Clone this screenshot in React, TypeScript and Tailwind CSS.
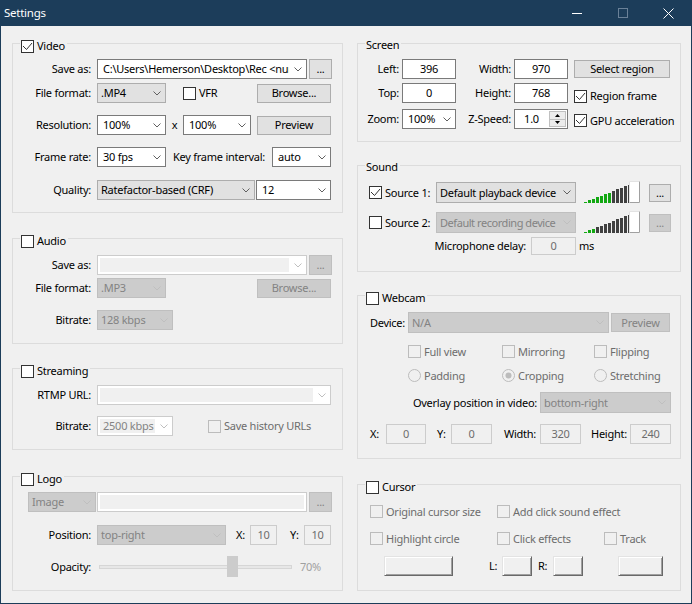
import React from 'react';

type V = 'edit' | 'list' | 'dlist' | 'dedit';

const Chevron = ({ d }: { d?: boolean }) => (
  <svg width="8" height="5" viewBox="0 0 8 5">
    <path d="M0.5 0.5L4 4L7.5 0.5" fill="none" stroke={d ? '#bfbfbf' : '#606060'} strokeWidth="1" />
  </svg>
);

function Combo({ w, text, v, h = 'h-[20px]', noArrow, tight }: { w: string; text?: string; v: V; h?: string; noArrow?: boolean; tight?: boolean }) {
  const cls = {
    edit: 'bg-white border-[#7a7a7a] text-black',
    list: 'bg-[#e1e1e1] border-[#adadad] text-black',
    dlist: 'bg-[#cccccc] border-[#bfbfbf] text-[#838383]',
    dedit: 'bg-white border-[#cccccc] text-[#838383]',
  }[v];
  const dis = v === 'dlist' || v === 'dedit';
  return (
    <div className={`flex shrink-0 border ${cls} ${w} ${h}`}>
      {v === 'dedit' ? (
        <div className={`flex-1 min-w-0 my-[2px] ml-[2px] ${noArrow ? 'mr-[2px]' : ''} bg-[#f0f0f0] flex items-center pl-[3px] overflow-hidden whitespace-nowrap`}>
          {text}
        </div>
      ) : (
        <div
          className={`flex-1 min-w-0 flex items-center ${v === 'edit' ? 'pl-[5px]' : 'pl-[3px]'} ${
            tight ? 'tracking-[-0.45px]' : ''
          } overflow-hidden whitespace-nowrap`}
        >
          {text}
        </div>
      )}
      {!noArrow && (
        <div className="w-[17px] shrink-0 flex items-center justify-center">
          <Chevron d={dis} />
        </div>
      )}
    </div>
  );
}

function Btn({ cls, children, d }: { cls: string; children?: React.ReactNode; d?: boolean }) {
  return (
    <div
      className={`flex shrink-0 items-center justify-center border whitespace-nowrap ${
        d ? 'bg-[#cccccc] border-[#bfbfbf] text-[#838383]' : 'bg-[#e1e1e1] border-[#adadad] text-black'
      } ${cls}`}
    >
      {children}
    </div>
  );
}

function Btn3d({ cls }: { cls: string }) {
  return (
    <div className={`shrink-0 h-[20px] bg-[#f0f0f0] border border-t-[#e3e3e3] border-l-[#e3e3e3] border-r-[#696969] border-b-[#696969] shadow-[inset_1px_1px_0_#ffffff,inset_-1px_-1px_0_#a0a0a0] ${cls}`} />
  );
}

function TBox({ cls, children, d }: { cls: string; children?: React.ReactNode; d?: boolean }) {
  return (
    <div
      className={`flex shrink-0 items-center justify-center border h-[20px] ${
        d ? 'bg-[#f0f0f0] border-[#cccccc] text-[#6d6d6d]' : 'bg-white border-[#7a7a7a] text-black'
      } ${cls}`}
    >
      {children}
    </div>
  );
}

function Check({ checked, d }: { checked?: boolean; d?: boolean }) {
  return (
    <span className={`inline-flex shrink-0 w-[13px] h-[13px] border ${d ? 'border-[#bcbcbc] bg-[#f0f0f0]' : 'border-[#333333] bg-white'}`}>
      {checked && (
        <svg width="11" height="11" viewBox="0 0 11 11">
          <path d="M1 5L4.5 8.5L10 2" fill="none" stroke="#333333" strokeWidth="1" />
        </svg>
      )}
    </span>
  );
}

function Radio({ checked }: { checked?: boolean }) {
  return (
    <svg width="13" height="13" viewBox="0 0 13 13" className="shrink-0">
      <circle cx="6.5" cy="6.5" r="6" fill="#f0f0f0" stroke="#bcbcbc" strokeWidth="1" />
      {checked && <circle cx="6.5" cy="6.5" r="3" fill="#bcbcbc" />}
    </svg>
  );
}

function CheckItem({ cls, label, checked, d }: { cls: string; label: string; checked?: boolean; d?: boolean }) {
  return (
    <div className={`flex items-center shrink-0 whitespace-nowrap ${cls}`}>
      <Check checked={checked} d={d} />
      <span className={`ml-[3px] ${d ? 'text-[#6d6d6d]' : ''}`}>{label}</span>
    </div>
  );
}

function RadioItem({ cls, label, checked }: { cls: string; label: string; checked?: boolean }) {
  return (
    <div className={`flex items-center shrink-0 whitespace-nowrap ${cls}`}>
      <Radio checked={checked} />
      <span className="ml-[3px] text-[#6d6d6d]">{label}</span>
    </div>
  );
}

function Lbl({ w = 'w-[78px]', children, cls = '' }: { w?: string; children: React.ReactNode; cls?: string }) {
  return <div className={`${w} shrink-0 text-right whitespace-nowrap ${cls}`}>{children}</div>;
}

function Row({ cls, children }: { cls: string; children: React.ReactNode }) {
  return <div className={`flex items-center shrink-0 ${cls}`}>{children}</div>;
}

function Group({ cls, title, check, children }: { cls: string; title: string; check?: boolean; children?: React.ReactNode }) {
  return (
    <div className={`border border-[#dcdcdc] flex flex-col shrink-0 ${cls}`}>
      <div className="-mt-[5px] ml-[7px] h-[14px] w-fit bg-[#f0f0f0] flex items-center pl-[1px] pr-[2px]">
        {check !== undefined && <Check checked={check} />}
        <span className={check !== undefined ? 'ml-[3px] -mt-[1px]' : '-mt-[2px]'}>{title}</span>
      </div>
      {children}
    </div>
  );
}

function Meter({ green }: { green: number }) {
  const hs = [1, 3, 4, 6, 7, 9, 10, 12, 14, 15, 17, 18];
  return (
    <svg width="57" height="23" viewBox="0 0 57 23" className="shrink-0">
      {hs.map((h, i) => (
        <rect key={i} x={i * 4} y={22 - h} width="3" height={h} fill={i < green ? '#12a812' : '#404040'} />
      ))}
      <rect x="45" y="0" width="11" height="22" fill="#ffffff" />
      <path d="M45.5 21.5V0.5H55.5" fill="none" stroke="#e3e3e3" strokeWidth="1" />
      <path d="M55.5 0.5V21.5H45.5" fill="none" stroke="#a0a0a0" strokeWidth="1" />
    </svg>
  );
}

function TitleBar() {
  return (
    <div className="h-[26px] flex items-center shrink-0 text-white">
      <span className="pl-[3px] text-[11.5px] -mt-[1px]">Settings</span>
      <div className="ml-auto flex h-full">
        <div className="w-[46px] flex items-center justify-center">
          <svg width="10" height="10" viewBox="0 0 10 10">
            <path d="M0 5.5H10" stroke="#ffffff" strokeWidth="1" />
          </svg>
        </div>
        <div className="w-[46px] flex items-center justify-center">
          <svg width="10" height="10" viewBox="0 0 10 10">
            <rect x="0.5" y="0.5" width="9" height="9" fill="none" stroke="#6a8198" strokeWidth="1" />
          </svg>
        </div>
        <div className="w-[45px] flex items-center justify-center">
          <svg width="11" height="11" viewBox="0 0 11 11">
            <path d="M0.5 0.5L10.5 10.5M10.5 0.5L0.5 10.5" stroke="#ffffff" strokeWidth="1" />
          </svg>
        </div>
      </div>
    </div>
  );
}

function Spin() {
  return (
    <div className="ml-[3px] w-[54px] h-[20px] flex shrink-0 border border-[#7a7a7a] bg-white">
      <div className="flex-1 flex items-center justify-center">1.0</div>
      <div className="w-[17px] flex flex-col border border-[#c0c0c0] bg-[#ececec] m-[1px]">
        <div className="flex-1 flex items-center justify-center border-b border-[#c0c0c0]">
          <svg width="5" height="3" viewBox="0 0 5 3">
            <path d="M0 3L2.5 0L5 3Z" fill="#000000" />
          </svg>
        </div>
        <div className="flex-1 flex items-center justify-center">
          <svg width="5" height="3" viewBox="0 0 5 3">
            <path d="M0 0L2.5 3L5 0Z" fill="#000000" />
          </svg>
        </div>
      </div>
    </div>
  );
}

export default function App() {
  return (
    <div className="w-[692px] h-[604px] bg-[#1c3d5a] flex flex-col px-[1px] pb-[1px] font-['Noto_Sans',sans-serif] text-[11px] leading-[14px] tracking-[-0.25px] text-black select-none overflow-hidden">
      <TitleBar />
      <div className="flex-1 bg-[#f0f0f0] flex">
        {/* Left column */}
        <div className="ml-[11px] w-[331px] flex flex-col shrink-0">
          <Group cls="mt-[17px] h-[170px]" title="Video" check>
            <Row cls="mt-[6px] h-[20px]">
              <Lbl>Save as:</Lbl>
              <Combo w="ml-[6px] w-[210px]" v="edit" text="C:\Users\Hemerson\Desktop\Rec <num" />
              <Btn cls="ml-[2px] w-[23px] h-[20px]">...</Btn>
            </Row>
            <Row cls="mt-[4px] h-[20px]">
              <Lbl>File format:</Lbl>
              <Combo w="ml-[6px] w-[69px]" v="list" text=".MP4" />
              <CheckItem cls="ml-[17px]" label="VFR" />
              <Btn cls="ml-auto mr-[11px] w-[74px] h-[19px]">Browse...</Btn>
            </Row>
            <Row cls="mt-[12px] h-[20px]">
              <Lbl>Resolution:</Lbl>
              <Combo w="ml-[6px] w-[69px]" v="edit" text="100%" />
              <span className="w-[17px] text-center">x</span>
              <Combo w="w-[68px]" v="edit" text="100%" />
              <Btn cls="ml-auto mr-[11px] w-[74px] h-[19px]">Preview</Btn>
            </Row>
            <Row cls="mt-[12px] h-[20px]">
              <Lbl>Frame rate:</Lbl>
              <Combo w="ml-[6px] w-[69px]" v="edit" text="30 fps" />
              <span className="ml-[7px] whitespace-nowrap">Key frame interval:</span>
              <Combo w="ml-auto mr-[11px] w-[59px]" v="edit" text="auto" />
            </Row>
            <Row cls="mt-[13px] h-[20px]">
              <Lbl>Quality:</Lbl>
              <Combo w="ml-[6px] w-[158px]" v="list" text="Ratefactor-based (CRF)" />
              <Combo w="ml-[1px] w-[75px]" v="edit" text="12" />
            </Row>
          </Group>

          <Group cls="mt-[25px] h-[106px]" title="Audio" check={false}>
            <Row cls="mt-[7px] h-[20px]">
              <Lbl>Save as:</Lbl>
              <Combo w="ml-[6px] w-[210px]" v="dedit" text="" />
              <Btn cls="ml-[2px] w-[23px] h-[20px]" d>...</Btn>
            </Row>
            <Row cls="mt-[3px] h-[20px]">
              <Lbl>File format:</Lbl>
              <Combo w="ml-[6px] w-[69px]" v="dlist" text=".MP3" />
              <Btn cls="ml-auto mr-[11px] w-[74px] h-[19px]" d>Browse...</Btn>
            </Row>
            <Row cls="mt-[12px] h-[20px]">
              <Lbl>Bitrate:</Lbl>
              <Combo w="ml-[6px] w-[76px]" v="dlist" text="128 kbps" />
            </Row>
          </Group>

          <Group cls="mt-[24px] h-[82px]" title="Streaming" check={false}>
            <Row cls="mt-[7px] h-[20px]">
              <Lbl>RTMP URL:</Lbl>
              <Combo w="ml-[6px] w-[234px]" v="dedit" text="" />
            </Row>
            <Row cls="mt-[11px] h-[20px]">
              <Lbl>Bitrate:</Lbl>
              <Combo w="ml-[6px] w-[76px]" v="dedit" text="2500 kbps" />
              <CheckItem cls="ml-[35px]" label="Save history URLs" d />
            </Row>
          </Group>

          <Group cls="mt-[26px] h-[115px]" title="Logo" check={false}>
            <Row cls="mt-[6px] h-[20px]">
              <Combo w="ml-[15px] w-[68px]" v="dlist" text="Image" />
              <Combo w="ml-[1px] w-[210px]" v="dedit" text="" noArrow />
              <Btn cls="ml-[2px] w-[23px] h-[20px]" d>...</Btn>
            </Row>
            <Row cls="mt-[13px] h-[20px]">
              <Lbl>Position:</Lbl>
              <Combo w="ml-[6px] w-[129px]" v="dlist" text="top-right" />
              <span className="ml-[10px] w-[14px]">X:</span>
              <TBox cls="w-[27px]" d>10</TBox>
              <span className="ml-[13px] w-[14px]">Y:</span>
              <TBox cls="w-[27px]" d>10</TBox>
            </Row>
            <Row cls="mt-[11px] h-[21px]">
              <Lbl>Opacity:</Lbl>
              <div className="ml-[8px] w-[193px] h-[21px] relative flex items-center shrink-0">
                <div className="w-full h-[4px] bg-[#e7e7e7] border border-[#d6d6d6]" />
                <div className="absolute left-[128px] top-0 w-[11px] h-[21px] bg-[#cccccc]" />
              </div>
              <span className="ml-[8px] text-[#a0a0a0]">70%</span>
            </Row>
          </Group>
        </div>

        {/* Right column */}
        <div className="ml-[14px] w-[324px] flex flex-col shrink-0">
          <Group cls="mt-[17px] h-[99px]" title="Screen">
            <Row cls="mt-[6px] h-[20px]">
              <Lbl w="w-[41px]">Left:</Lbl>
              <TBox cls="ml-[3px] w-[54px]">396</TBox>
              <Lbl w="w-[55px]">Width:</Lbl>
              <TBox cls="ml-[3px] w-[54px]">970</TBox>
              <Btn cls="ml-[6px] w-[96px] h-[18px]">Select region</Btn>
            </Row>
            <Row cls="mt-[4px] h-[20px]">
              <Lbl w="w-[41px]">Top:</Lbl>
              <TBox cls="ml-[3px] w-[54px]">0</TBox>
              <Lbl w="w-[55px]">Height:</Lbl>
              <TBox cls="ml-[3px] w-[54px]">768</TBox>
              <CheckItem cls="ml-[6px] self-end h-[14px]" label="Region frame" checked />
            </Row>
            <Row cls="mt-[6px] h-[20px]">
              <Lbl w="w-[41px]">Zoom:</Lbl>
              <Combo w="ml-[3px] w-[54px]" v="edit" text="100%" />
              <Lbl w="w-[55px]">Z-Speed:</Lbl>
              <Spin />
              <CheckItem cls="ml-[6px] pt-[3px]" label="GPU acceleration" checked />
            </Row>
          </Group>

          <Group cls="mt-[23px] h-[107px]" title="Sound">
            <Row cls="mt-[7px] h-[21px]">
              <div className="w-[78px] shrink-0 flex items-center pl-[11px]">
                <Check checked />
                <span className="ml-[3px] whitespace-nowrap">Source 1:</span>
              </div>
              <Combo w="w-[140px]" h="h-[21px]" v="list" text="Default playback device" />
              <div className="ml-[8px]">
                <Meter green={7} />
              </div>
              <Btn cls="ml-[8px] w-[22px] h-[18px]">...</Btn>
            </Row>
            <Row cls="mt-[9px] h-[21px]">
              <div className="w-[78px] shrink-0 flex items-center pl-[11px]">
                <Check />
                <span className="ml-[3px] whitespace-nowrap">Source 2:</span>
              </div>
              <Combo w="w-[140px]" h="h-[21px]" v="dlist" text="Default recording device" tight />
              <div className="ml-[8px]">
                <Meter green={3} />
              </div>
              <Btn cls="ml-[8px] w-[22px] h-[18px]" d>...</Btn>
            </Row>
            <Row cls="mt-[4px] h-[18px]">
              <Lbl w="w-[168px]">Microphone delay:</Lbl>
              <TBox cls="ml-[5px] w-[45px] !h-[18px]" d>0</TBox>
              <span className="ml-[3px]">ms</span>
            </Row>
          </Group>

          <Group cls="mt-[23px] h-[164px]" title="Webcam" check={false}>
            <Row cls="mt-[7px] h-[21px]">
              <Lbl w="w-[47px]">Device:</Lbl>
              <Combo w="ml-[3px] w-[201px]" h="h-[21px]" v="dlist" text="N/A" />
              <Btn cls="ml-[2px] w-[59px] h-[19px]" d>Preview</Btn>
            </Row>
            <Row cls="mt-[12px] h-[13px]">
              <CheckItem cls="ml-[50px] w-[94px]" label="Full view" d />
              <CheckItem cls="w-[92px]" label="Mirroring" d />
              <CheckItem cls="" label="Flipping" d />
            </Row>
            <Row cls="mt-[11px] h-[13px]">
              <RadioItem cls="ml-[50px] w-[94px]" label="Padding" />
              <RadioItem cls="w-[92px]" label="Cropping" checked />
              <RadioItem cls="" label="Stretching" />
            </Row>
            <Row cls="mt-[10px] h-[21px]">
              <Lbl w="w-[179px]">Overlay position in video:</Lbl>
              <Combo w="ml-[3px] w-[131px]" h="h-[21px]" v="dlist" text="bottom-right" />
            </Row>
            <Row cls="mt-[11px] h-[20px]">
              <span className="ml-[12px] w-[16px] shrink-0">X:</span>
              <TBox cls="w-[40px]" d>0</TBox>
              <span className="ml-[11px] w-[14px] shrink-0">Y:</span>
              <TBox cls="w-[41px]" d>0</TBox>
              <span className="ml-[12px] w-[36px] shrink-0">Width:</span>
              <TBox cls="w-[41px]" d>320</TBox>
              <span className="ml-[10px] w-[39px] shrink-0">Height:</span>
              <TBox cls="w-[41px]" d>240</TBox>
            </Row>
          </Group>

          <Group cls="mt-[25px] h-[107px]" title="Cursor" check={false}>
            <Row cls="mt-[11px] h-[13px]">
              <CheckItem cls="ml-[12px] w-[127px]" label="Original cursor size" d />
              <CheckItem cls="" label="Add click sound effect" d />
            </Row>
            <Row cls="mt-[14px] h-[13px]">
              <CheckItem cls="ml-[12px] w-[127px]" label="Highlight circle" d />
              <CheckItem cls="w-[107px]" label="Click effects" d />
              <CheckItem cls="" label="Track" d />
            </Row>
            <Row cls="mt-[11px] h-[20px]">
              <Btn3d cls="ml-[26px] w-[69px]" />
              <span className="ml-[36px] w-[13px] shrink-0">L:</span>
              <Btn3d cls="w-[30px]" />
              <span className="ml-[6px] w-[15px] shrink-0">R:</span>
              <Btn3d cls="w-[30px]" />
              <Btn3d cls="ml-[35px] w-[45px]" />
            </Row>
          </Group>
        </div>
      </div>
    </div>
  );
}
